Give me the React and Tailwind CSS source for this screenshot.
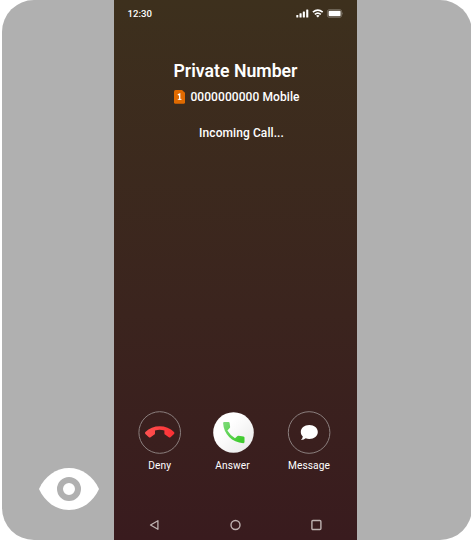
function StatusIcons() {
  return (
    <svg className="h-3 w-12" viewBox="0 0 48 12" fill="none">
      <g fill="#fff">
        <rect x="0.3" y="6.9" width="2" height="2.6" rx="0.5" />
        <rect x="3.5" y="5.3" width="2.1" height="4.2" rx="0.5" />
        <rect x="6.8" y="3.5" width="2.1" height="6" rx="0.5" />
        <rect x="10.2" y="1.6" width="2.1" height="7.9" rx="0.5" />
      </g>
      <g stroke="#fff" strokeWidth="1.6">
        <path d="M16.9 4.2Q21.8-.1 26.7 4.2" />
        <path d="M18.8 6.4Q21.8 3.8 24.8 6.4" />
      </g>
      <path d="M20.1 7.8Q21.8 6.4 23.5 7.8L21.8 9.6Z" fill="#fff" />
      <rect x="31.4" y="1.6" width="14.2" height="7.8" rx="2" stroke="#fff" strokeOpacity=".35" strokeWidth=".8" />
      <rect x="32.6" y="2.8" width="12" height="5.5" rx="1" fill="#fff" />
      <path d="M46.5 4.1Q47.6 5.5 46.5 6.9Z" fill="#fff" fillOpacity=".45" />
    </svg>
  );
}

function Action({ label, className, labelClass = "", children }) {
  return (
    <div className={`flex flex-col items-center ${className}`}>
      <div className="flex h-[43px] items-center">{children}</div>
      <span className={`mt-[5px] text-[10.2px] leading-[14px] tracking-[0.1px] whitespace-nowrap ${labelClass}`}>{label}</span>
    </div>
  );
}

function Phone() {
  return (
    <main className="flex h-full w-[243px] shrink-0 flex-col bg-linear-to-b from-[#3d301d] to-[#391b1e] text-white">
      <header className="flex h-[27px] items-center justify-between pr-[13px] pl-[13.5px]">
        <span className="text-[9.6px] leading-3 font-medium">12:30</span>
        <StatusIcons />
      </header>
      <section className="flex flex-col items-center pt-8">
        <h1 className="text-[17.7px] leading-6 font-semibold whitespace-nowrap">Private Number</h1>
        <div className="mt-[6px] ml-[3px] flex items-center gap-[5px]">
          <svg className="h-[14px] w-[11px]" viewBox="0 0 11 14">
            <path d="M1.5 0H8L11 2.8V12.3Q11 13.8 9.5 13.8H1.5Q0 13.8 0 12.3V1.5Q0 0 1.5 0Z" fill="#e06a00" />
            <path d="M3.8 4.9L5.7 4.1V9.8" fill="none" stroke="#fff" strokeWidth="1.3" />
            <path d="M3.8 9.4H7.5" fill="none" stroke="#fff" strokeWidth="0.9" />
          </svg>
          <span className="text-[12px] leading-4 font-medium tracking-[0.08px] whitespace-nowrap">0000000000 Mobile</span>
        </div>
        <p className="mt-5 ml-3 text-[12px] leading-4 font-medium tracking-[0.08px]">Incoming Call...</p>
      </section>
      <section className="mt-auto flex items-start pl-6">
        <Action label="Deny" className="w-[43px]" labelClass="pl-[0.5px]">
          <svg className="h-[43px] w-[43px]" viewBox="0 0 43 43">
            <defs>
              <linearGradient id="deny" x1="0" x2="1"><stop stopColor="#ff5351" /><stop offset="1" stopColor="#fb2f33" /></linearGradient>
            </defs>
            <circle cx="21.7" cy="21.5" r="20.8" fill="none" stroke="#8b7f7e" />
            <path d="M7.4 21C14.7 13.4 28.7 13.4 36 21Q36.9 22 36 22.9L32.5 26.2Q31.7 26.9 30.8 26.2L27 23.6Q26.4 23.2 26.4 22.4V19.5Q21.7 18.2 17 19.5V22.4Q17 23.2 16.4 23.6L12.6 26.2Q11.7 26.9 10.9 26.2L7.4 22.9Q6.5 22 7.4 21Z" fill="url(#deny)" />
          </svg>
        </Action>
        <Action label="Answer" className="ml-8 w-[41px]" labelClass="pr-[2px]">
          <svg className="h-[41px] w-[41px]" viewBox="0 0 41 41">
            <defs>
              <linearGradient id="disc" x1="0" y1="0" x2="1" y2="1"><stop offset=".35" stopColor="#fff" /><stop offset="1" stopColor="#e7e7e7" /></linearGradient>
              <linearGradient id="answer" x1="0" y1="0" x2="1" y2="1"><stop stopColor="#7fdb7b" /><stop offset=".85" stopColor="#3fcb2e" /></linearGradient>
            </defs>
            <circle cx="20.5" cy="20.5" r="20.3" fill="url(#disc)" />
            <path d="M11.2 10H15.5Q16.5 10 16.6 11L17.1 14.8Q17.2 15.5 16.7 16L14.4 18.4Q17.2 23.2 22 26.3L24.5 24Q25 23.6 25.6 23.7L30.5 24.4Q31.5 24.6 31.5 25.5V30.1Q31.5 31.2 30.4 31.2C19 30.7 10.6 22 10.1 11.1Q10.1 10 11.2 10Z" fill="url(#answer)" />
          </svg>
        </Action>
        <Action label="Message" className="ml-[33px] w-[43px]" labelClass="translate-x-[0.5px]">
          <svg className="h-[43px] w-[43px] overflow-visible" viewBox="0 0 43 43">
            <circle cx="22.1" cy="21.5" r="20.8" fill="none" stroke="#8b7f7e" />
            <path d="M22.3 14C27.3 14 30.8 16.9 30.8 20.9C30.8 24.9 27.2 27.9 22.3 27.9C21 27.9 19.8 27.7 18.7 27.3Q17 29 14 29.1Q15.5 27.4 15.8 25.4C14.5 24.2 13.8 22.6 13.8 20.9C13.8 16.9 17.3 14 22.3 14Z" fill="#fff" />
          </svg>
        </Action>
      </section>
      <footer className="mt-[46px] flex h-[21px] pb-[9px] pl-[35px]">
        <svg className="h-3 w-3" viewBox="0 0 12 12"><path d="M1.5 6L8.9 1.7V10.3Z" fill="none" stroke="#beb2b1" strokeWidth="1.3" strokeLinejoin="round" /></svg>
        <svg className="ml-[69px] h-3 w-3" viewBox="0 0 12 12"><circle cx="5.5" cy="6" r="4.5" fill="none" stroke="#beb2b1" strokeWidth="1.4" /></svg>
        <svg className="ml-[69px] h-3 w-3" viewBox="0 0 12 12"><rect x="0.9" y="1.5" width="9" height="9" rx="1" fill="none" stroke="#beb2b1" strokeWidth="1.4" /></svg>
      </footer>
    </main>
  );
}

export default function App() {
  return (
    <div className="h-[540px] w-[471px] overflow-hidden bg-white pl-[2px] font-['Roboto',sans-serif]">
      <div className="flex h-full w-[470px] rounded-[32px] bg-[#b0b0b0]">
        <aside className="flex w-28 shrink-0 items-end pb-[30px] pl-[37px]">
          <svg className="h-[42px] w-[60px]" viewBox="0 0 60 42">
            <path d="M0 21C6 8 17 0 30 0S54 8 60 21C54 34 43 42 30 42S6 34 0 21Z" fill="#fff" />
            <circle cx="30" cy="21" r="9" fill="#fff" stroke="#b0b0b0" strokeWidth="6" />
          </svg>
        </aside>
        <Phone />
      </div>
    </div>
  );
}
